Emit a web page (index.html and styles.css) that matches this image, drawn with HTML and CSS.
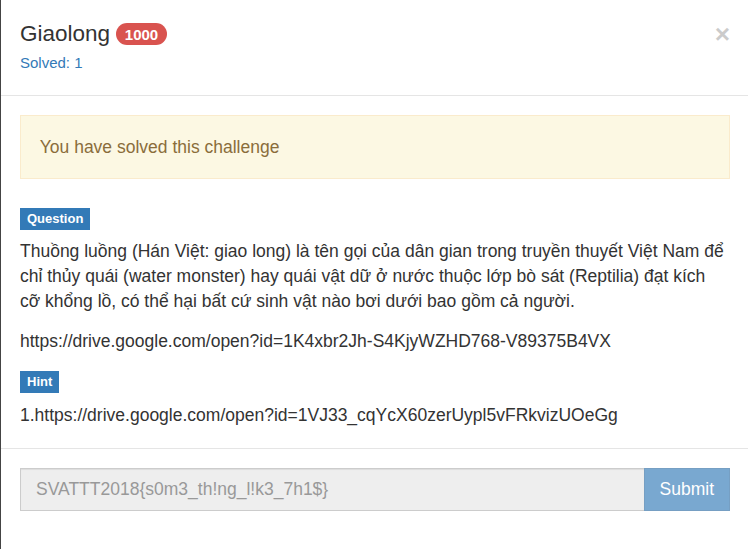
FILE: index.html
```html
<!DOCTYPE html>
<html lang="vi">
<head>
<meta charset="utf-8">
<title>Giaolong</title>
<link rel="stylesheet" href="styles.css">
</head>
<body>
<div class="modal">
  <div class="modal-header">
    <div class="title-block">
      <h4 class="modal-title">Giaolong <span class="badge">1000</span></h4>
      <div class="solves">Solved: 1</div>
    </div>
    <button class="close" type="button">×</button>
  </div>
  <div class="modal-body">
    <div class="alert">You have solved this challenge</div>
    <div class="label-row"><span class="label">Question</span></div>
    <p class="text">Thuồng luồng (Hán Việt: giao long) là tên gọi của dân gian trong truyền thuyết Việt Nam để chỉ thủy quái (water monster) hay quái vật dữ ở nước thuộc lớp bò sát (Reptilia) đạt kích cỡ khổng lồ, có thể hại bất cứ sinh vật nào bơi dưới bao gồm cả người.</p>
    <p class="text url">https://drive.google.com/open?id=1K4xbr2Jh-S4KjyWZHD768-V89375B4VX</p>
    <div class="label-row hint-row"><span class="label">Hint</span></div>
    <p class="text last">1.https://drive.google.com/open?id=1VJ33_cqYcX60zerUypl5vFRkvizUOeGg</p>
  </div>
  <div class="modal-footer">
    <div class="input-group">
      <input class="flag-input" type="text" value="SVATTT2018{s0m3_th!ng_l!k3_7h1$}" disabled>
      <button class="submit" type="button" disabled>Submit</button>
    </div>
  </div>
</div>
</body>
</html>
```

FILE: styles.css
```css
html, body {
  margin: 0;
  padding: 0;
  background: #fff;
}
body {
  font-family: "Liberation Sans", Arial, Helvetica, sans-serif;
  color: #333;
  font-size: 17.5px;
  overflow: hidden;
}
.modal {
  width: 748px;
  min-height: 549px;
  box-sizing: border-box;
  border-left: 1px solid #444;
  background: #fff;
}
.modal-header {
  display: flex;
  justify-content: space-between;
  align-items: flex-start;
  padding: 22px 18px 21.25px 19px;
  border-bottom: 1px solid #e5e5e5;
}
.modal-title {
  margin: 0;
  font-size: 22.5px;
  font-weight: normal;
  line-height: 24.75px;
  color: #333;
}
.badge {
  display: inline-block;
  background: #d9534f;
  color: #fff;
  font-size: 15px;
  font-weight: bold;
  line-height: 1;
  padding: 3.25px 8.5px;
  border-radius: 12px;
  vertical-align: middle;
  position: relative;
  top: -1px;
}
.solves {
  margin-top: 5.6px;
  font-size: 15px;
  line-height: 21.4px;
  color: #337ab7;
}
.close {
  border: 0;
  background: transparent;
  padding: 0;
  margin: -1px 0 0 0;
  font-family: "Liberation Sans", Arial, sans-serif;
  font-size: 26.25px;
  font-weight: bold;
  line-height: 1;
  color: #000;
  opacity: 0.2;
}
.modal-body {
  padding: 19px 18px 20.5px 19px;
}
.alert {
  border: 1px solid #faebcc;
  background: #fcf8e3;
  color: #8a6d3b;
  padding: 18.5px 18.75px;
  line-height: 25px;
  margin-bottom: 28px;
}
.label-row {
  height: 22px;
  margin-bottom: 9.5px;
}
.hint-row {
  height: 21.5px;
  margin-bottom: 11px;
}
.label {
  display: inline-block;
  background: #337ab7;
  color: #fff;
  font-size: 13px;
  font-weight: bold;
  line-height: 1;
  padding: 4px 7px 5px;
}
.text {
  margin: 0 0 15px;
  line-height: 25px;
}
.url {
  margin-bottom: 16.5px;
}
.last {
  margin-bottom: 0;
}
.modal-footer {
  border-top: 1px solid #e5e5e5;
  padding: 19px 18px 19px 19px;
}
.input-group {
  display: flex;
  height: 42.5px;
}
.flag-input {
  flex: 1;
  min-width: 0;
  box-sizing: border-box;
  height: 42.5px;
  margin: 0;
  border: 1px solid #ccc;
  border-right: 0;
  border-radius: 0;
  background: #eee;
  box-shadow: inset 0 1px 1px rgba(0, 0, 0, .075);
  padding: 7.5px 15px;
  font-family: "Liberation Sans", Arial, sans-serif;
  font-size: 17.5px;
  color: #999;
}
.submit {
  box-sizing: border-box;
  height: 42.5px;
  margin: 0;
  padding: 0 15px;
  border: 1px solid #2e6da4;
  border-radius: 0;
  background: #337ab7;
  opacity: 0.65;
  color: #fff;
  font-family: "Liberation Sans", Arial, sans-serif;
  font-size: 17.5px;
}
```
